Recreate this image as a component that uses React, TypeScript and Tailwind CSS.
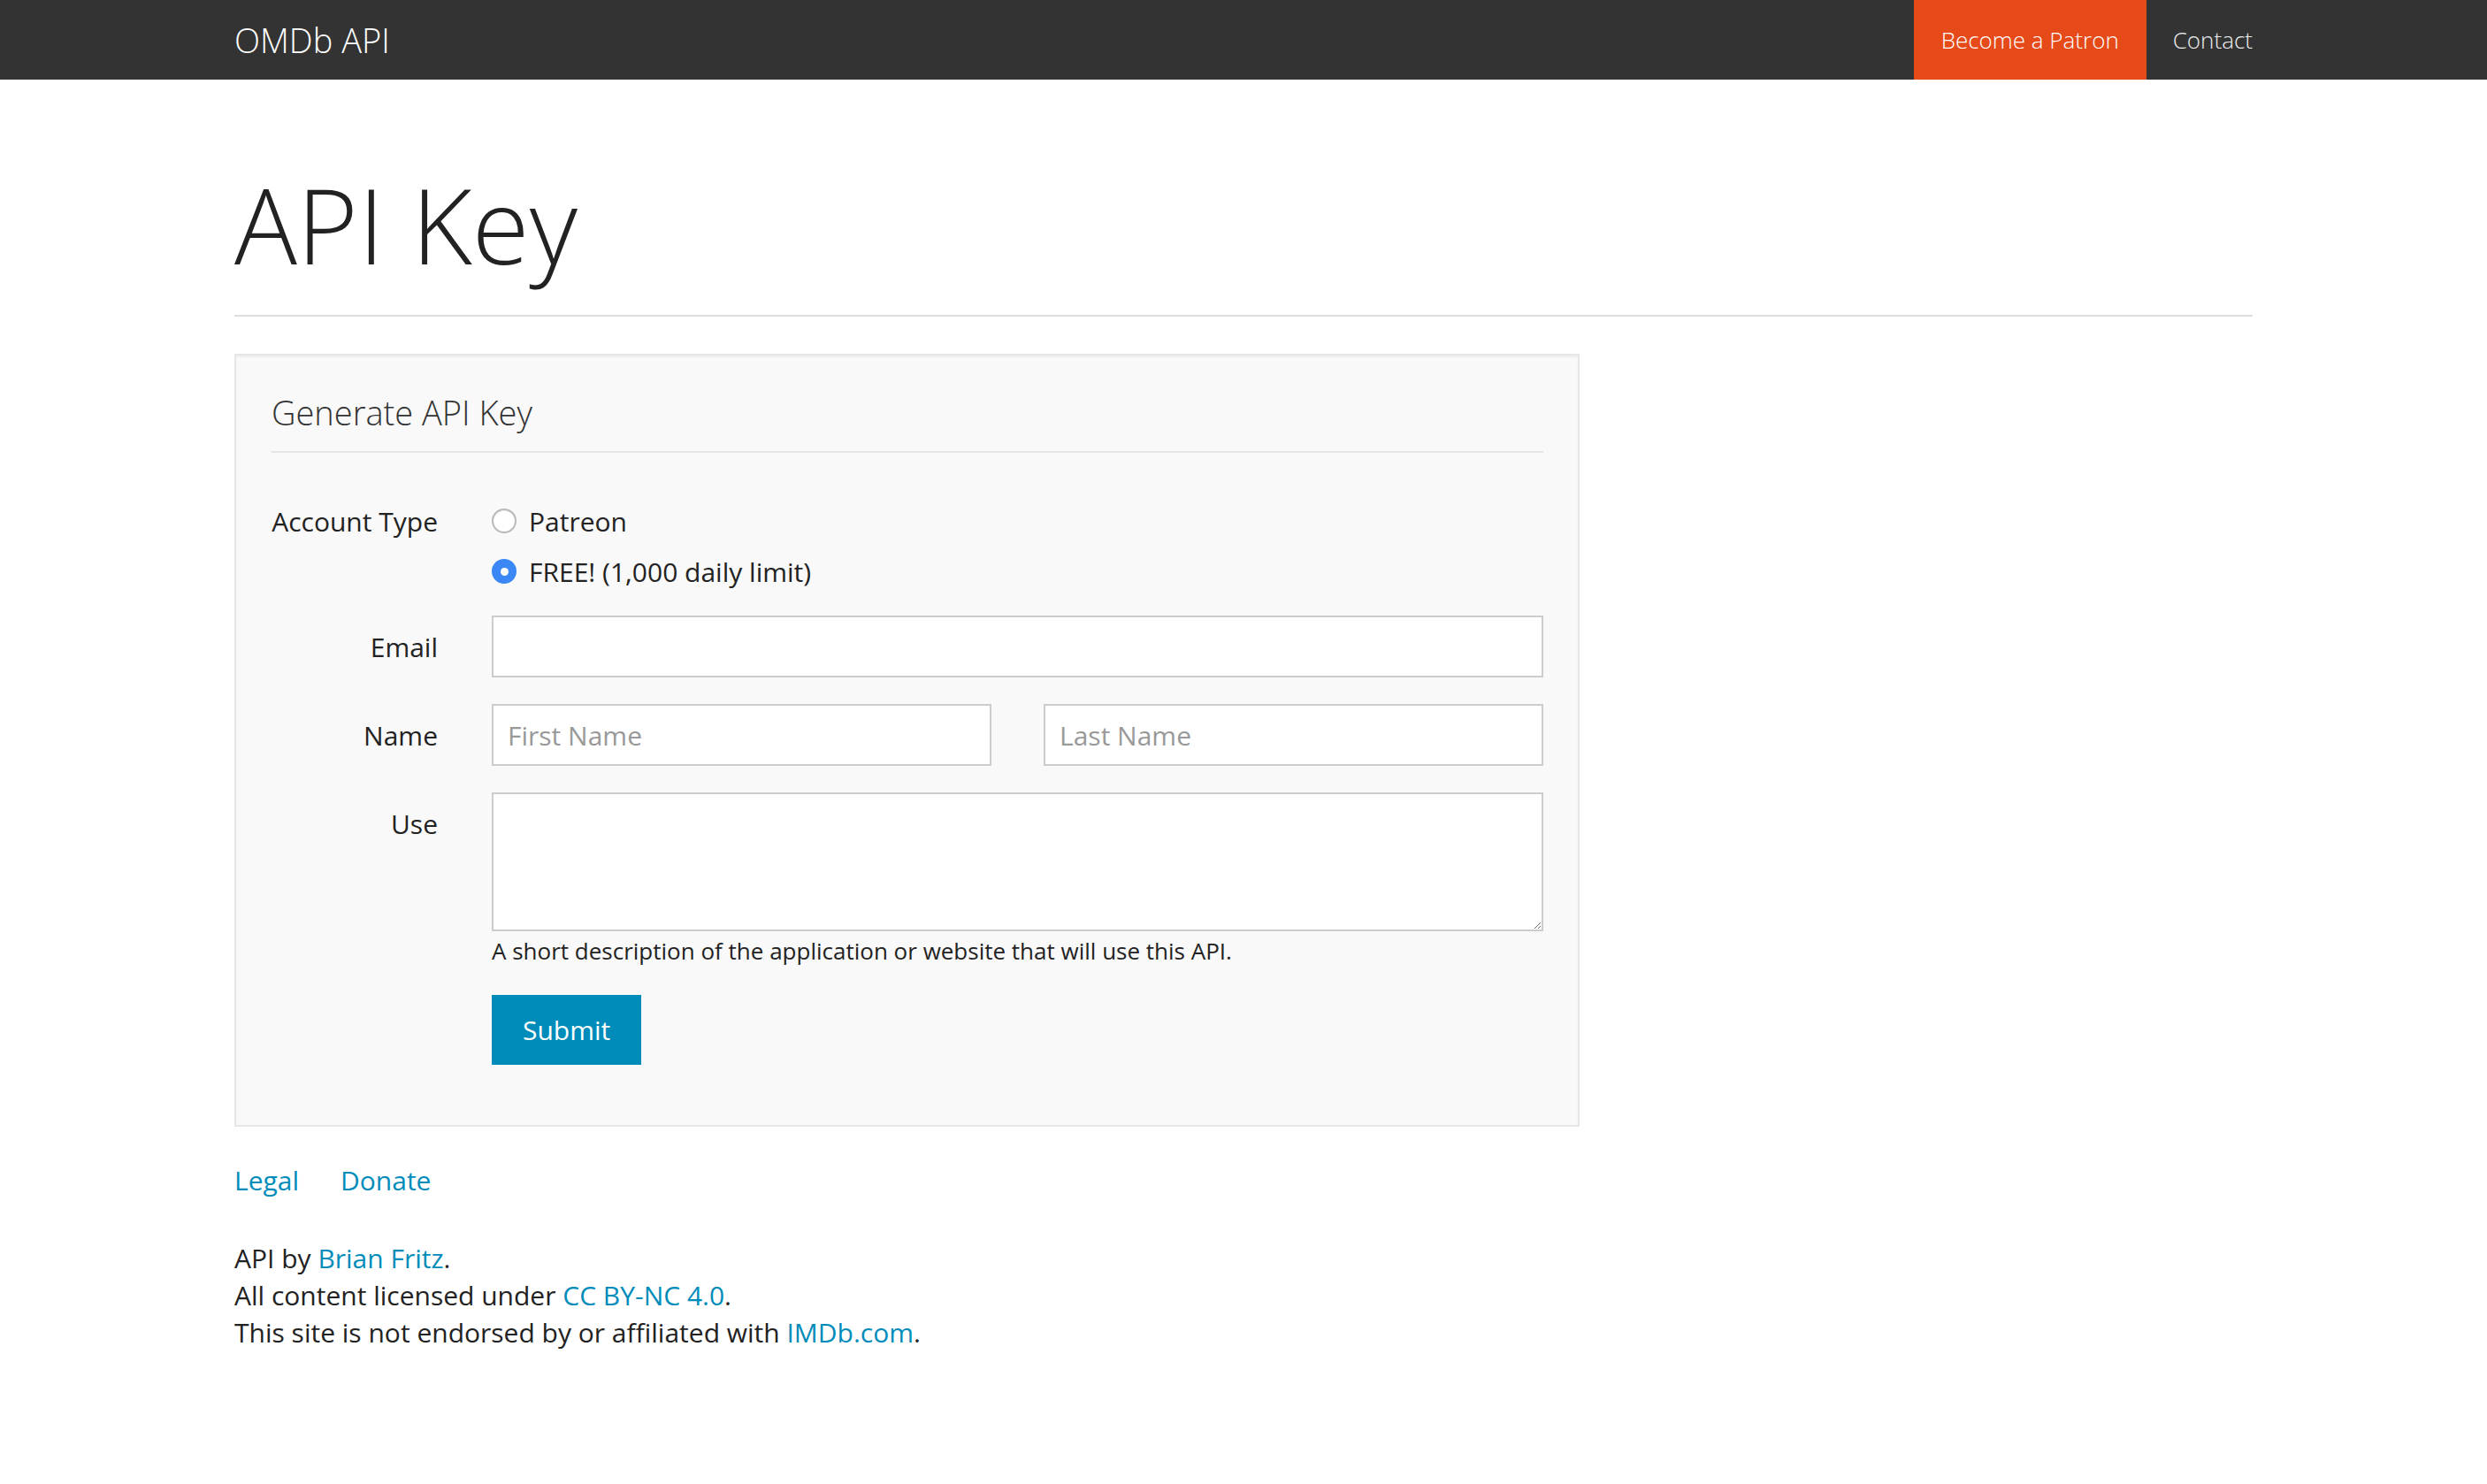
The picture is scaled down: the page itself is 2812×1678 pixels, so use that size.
import React from 'react';

const font = "font-['Open_Sans','Liberation_Sans',sans-serif]";

const Radio = ({ checked, label }: { checked: boolean; label: string }) => (
  <label className="flex items-center h-[44px] gap-[14px] text-[30px] text-[#222]">
    {checked ? (
      <span className="w-[28px] h-[28px] rounded-full bg-[#3b87f6] flex items-center justify-center">
        <span className="w-[9px] h-[9px] rounded-full bg-white" />
      </span>
    ) : (
      <span className="w-[28px] h-[28px] rounded-full bg-white border-2 border-[#b9b9b9] shadow-[inset_0_1px_1px_rgba(0,0,0,0.08)]" />
    )}
    <span>{label}</span>
  </label>
);

const FormRow = ({ label, children }: { label: string; children: React.ReactNode }) => (
  <div className="flex items-start">
    <div className="w-[188px] shrink-0 h-[70px] flex items-center justify-end text-[30px] text-[#222]">
      {label}
    </div>
    <div className="ml-[61px] flex-1">{children}</div>
  </div>
);

const inputCls =
  'w-full h-[70px] bg-white border-2 border-[#ccc] px-[16px] text-[30px] text-[#222] placeholder:text-[#999] outline-none';

export default function App() {
  return (
    <div className={`${font} min-h-screen bg-white text-[#222]`}>
      {/* navbar */}
      <nav className="bg-[#333] h-[90px]">
        <div className="w-[2282px] mx-auto h-full flex items-center justify-between">
          <a className="text-white text-[38px] font-light leading-none">OMDb API</a>
          <ul className="flex h-full">
            <li className="h-full">
              <a className="h-full flex items-center px-[31px] bg-[#e64a19] text-white text-[26px] font-light">
                Become a Patron
              </a>
            </li>
            <li className="h-full">
              <a className="h-full flex items-center pl-[30px] text-[#eee] text-[26px] font-light">
                Contact
              </a>
            </li>
          </ul>
        </div>
      </nav>

      <main className="w-[2282px] mx-auto">
        <div className="mt-[88px] pb-[35px] border-b-2 border-[#ddd]">
          <h1 className="text-[118px] leading-[143px] pt-[4px] -mb-[4px] font-light text-[#222]">API Key</h1>
        </div>

        <div className="mt-[42px] w-[1521px] bg-[#f9f9f9] border-2 border-[#e6e6e6] shadow-[inset_0_2px_2px_rgba(0,0,0,0.05)] pt-[34px] pb-[68px] pl-[40px] pr-[39px]">
          <div className="text-[38px] leading-[60px] font-light text-[#333] pb-[14px] border-b-2 border-[#e5e5e5]">
            Generate API Key
          </div>

          <div className="mt-[55px] flex items-start">
            <div className="w-[188px] shrink-0 h-[44px] flex items-center justify-end text-[30px]">
              Account Type
            </div>
            <div className="ml-[61px] flex flex-col gap-[13px]">
              <Radio checked={false} label="Patreon" />
              <Radio checked label="FREE! (1,000 daily limit)" />
            </div>
          </div>

          <div className="mt-[28px] flex flex-col gap-[30px]">
            <FormRow label="Email">
              <input className={inputCls} type="text" />
            </FormRow>
            <FormRow label="Name">
              <div className="flex gap-[59px]">
                <input className={inputCls} type="text" placeholder="First Name" />
                <input className={inputCls} type="text" placeholder="Last Name" />
              </div>
            </FormRow>
            <FormRow label="Use">
              <textarea className="w-full h-[157px] block bg-white border-2 border-[#ccc] px-[16px] py-[10px] text-[30px] outline-none" />
              <p className="mt-[2px] text-[26px] leading-[40px] text-[#222]">
                A short description of the application or website that will use this API.
              </p>
              <button className="mt-[30px] h-[79px] px-[35px] bg-[#008cba] text-white text-[30px]">
                Submit
              </button>
            </FormRow>
          </div>
        </div>

        <div className="mt-[40px] flex gap-[47px] text-[30px] leading-[42px] text-[#008cba]">
          <a>Legal</a>
          <a>Donate</a>
        </div>

        <div className="mt-[46px] text-[30px] leading-[42px] text-[#222]">
          <p>
            API by <a className="text-[#008cba]">Brian Fritz</a>.
          </p>
          <p>
            All content licensed under <a className="text-[#008cba]">CC BY-NC 4.0</a>.
          </p>
          <p>
            This site is not endorsed by or affiliated with <a className="text-[#008cba]">IMDb.com</a>.
          </p>
        </div>
      </main>
    </div>
  );
}
